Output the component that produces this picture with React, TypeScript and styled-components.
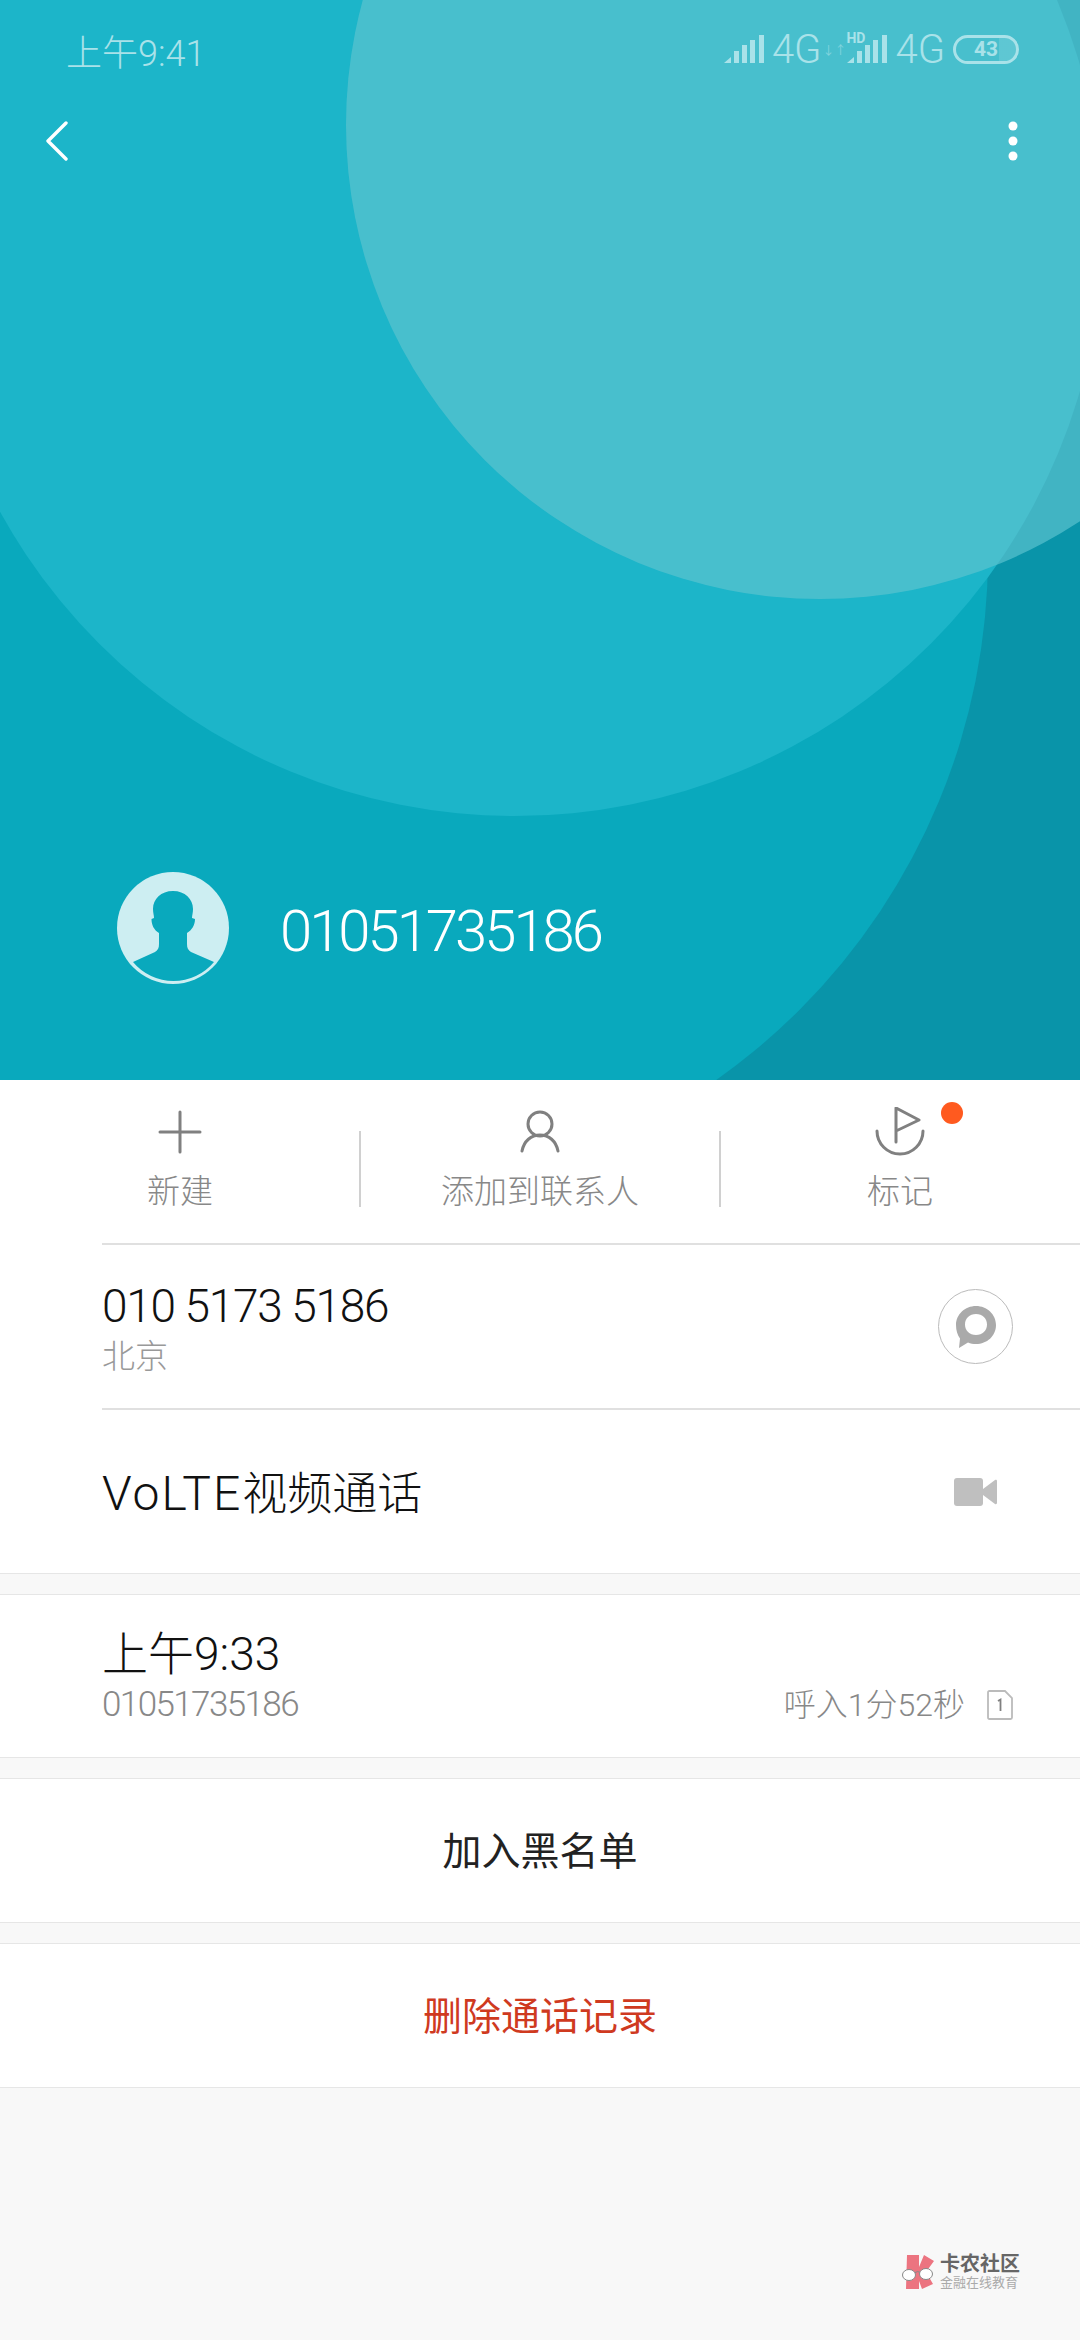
import styled, { createGlobalStyle } from "styled-components"

const SANS = `Roboto, "Noto Sans CJK SC", sans-serif`

export default function App() {
    return (
        <Page>
            <GlobalStyle />
            <Hero>
                <HeroArt viewBox="0 0 1080 1080">
                    <rect width="1080" height="1080" fill="#0994a9" />
                    <circle cx="345" cy="555" r="643" fill="#09a9bd" />
                    <circle cx="515" cy="228" r="588" fill="#1cb5c9" />
                    <circle cx="820" cy="125" r="474" fill="#5ec4cf" fillOpacity="0.67" />
                </HeroArt>
                <StatusBar>
                    <Clock>上午9:41</Clock>
                    <StatusIcons>
                        <Signal />
                        <Net>4G</Net>
                        <Arrows>↓↑</Arrows>
                        <HdSignal>
                            <HdTag>HD</HdTag>
                            <Signal />
                        </HdSignal>
                        <Net>4G</Net>
                        <Battery>
                            <BatteryLevel>43</BatteryLevel>
                        </Battery>
                    </StatusIcons>
                </StatusBar>
                <TopBar>
                    <svg width="24" height="40" viewBox="0 0 24 40">
                        <path d="M21 2 L3 20 L21 38" fill="none" stroke="#fff" strokeWidth="3.4" strokeLinecap="round" strokeLinejoin="round" />
                    </svg>
                    <svg width="10" height="40" viewBox="0 0 10 40">
                        <circle cx="5" cy="5" r="4.5" fill="#fff" />
                        <circle cx="5" cy="20" r="4.5" fill="#fff" />
                        <circle cx="5" cy="35" r="4.5" fill="#fff" />
                    </svg>
                </TopBar>
                <Caller>
                    <svg width="112" height="112" viewBox="0 0 112 112">
                        <circle cx="56" cy="56" r="56" fill="#cdeef2" />
                        <path d="M56 19 C44 19 36 27 36 37 C36 41 37 43 37 46 L34.5 47 C34.5 53 37 58 42 61 L42 72 C42 76 41 78 38 80 L16 90 A52.5 52.5 0 0 0 97 90 L74 80 C71 78 70 76 70 72 L70 61 C75 58 78 53 78 47 L75 46 C75 43 76 41 76 37 C76 27 68 19 56 19 Z" fill="#09a9bd" />
                    </svg>
                    <CallerName>01051735186</CallerName>
                </Caller>
            </Hero>

            <Card>
                <Actions>
                    <Action>
                        <ActionIcon>
                            <svg width="44" height="44" viewBox="0 0 44 44">
                                <path d="M22 2 V42 M2 22 H42" fill="none" stroke="#808080" strokeWidth="3" strokeLinecap="round" />
                            </svg>
                        </ActionIcon>
                        <ActionLabel>新建</ActionLabel>
                    </Action>
                    <Action $divider>
                        <ActionIcon>
                            <svg width="44" height="48" viewBox="0 0 44 48">
                                <circle cx="22" cy="16" r="12" fill="none" stroke="#808080" strokeWidth="3" />
                                <path d="M4 43 C6 33 13 27 22 27 C31 27 38 33 40 43" fill="none" stroke="#808080" strokeWidth="3" strokeLinecap="round" />
                            </svg>
                        </ActionIcon>
                        <ActionLabel>添加到联系人</ActionLabel>
                    </Action>
                    <Action $divider>
                        <ActionIcon>
                            <svg width="50" height="50" viewBox="0 0 50 50">
                                <path d="M2 24 A23 23 0 0 0 48 24" fill="none" stroke="#808080" strokeWidth="3" strokeLinecap="round" />
                                <path d="M21 35 V1 L44 13 L21 24" fill="none" stroke="#808080" strokeWidth="3" strokeLinecap="round" strokeLinejoin="round" />
                            </svg>
                            <Dot />
                        </ActionIcon>
                        <ActionLabel>标记</ActionLabel>
                    </Action>
                </Actions>

                <InfoRow>
                    <InfoText>
                        <PhoneNumber>010 5173 5186</PhoneNumber>
                        <Sub>北京</Sub>
                    </InfoText>
                    <RoundButton>
                        <svg width="42" height="44" viewBox="0 0 42 44">
                            <path fillRule="evenodd" d="M21 1 C32 1 41 9.5 41 20 C41 31 32 39 21 39 C18 39 15.5 38.5 13 37.5 L4 43 L5 33.5 C2.5 30 1 25.5 1 20 C1 9.5 10 1 21 1 Z M21 9 C14.5 9 10 13.5 10 19.5 C10 25.5 14.5 30 21 30 C27.5 30 32 25.5 32 19.5 C32 13.5 27.5 9 21 9 Z" fill="#aaaaaa" />
                        </svg>
                    </RoundButton>
                </InfoRow>

                <VideoRow>
                    <Title>
                        <TitleLatin>VoLTE</TitleLatin>视频通话
                    </Title>
                    <svg width="43" height="28" viewBox="0 0 43 28">
                        <rect x="0" y="0" width="29" height="28" rx="3" fill="#bfbfbf" />
                        <path d="M29 11 L41 2 C42 1.5 43 2 43 3 V25 C43 26 42 26.5 41 26 L29 17 Z" fill="#bfbfbf" />
                    </svg>
                </VideoRow>
            </Card>

            <Section $height={164}>
                <LogRow>
                    <InfoText>
                        <LogTime>上午9:33</LogTime>
                        <LogNumber>01051735186</LogNumber>
                    </InfoText>
                    <LogMeta>
                        呼入1分52秒
                        <svg width="26" height="30" viewBox="0 0 26 30">
                            <path d="M2.5 1 H18 L25 8 V27.5 C25 28.5 24.5 29 23.5 29 H2.5 C1.5 29 1 28.5 1 27.5 V2.5 C1 1.5 1.5 1 2.5 1 Z" fill="none" stroke="#bbbbbb" strokeWidth="1.8" />
                            <path d="M11 11 L13.5 9.5 V21" fill="none" stroke="#808080" strokeWidth="1.8" />
                        </svg>
                    </LogMeta>
                </LogRow>
            </Section>

            <Section $height={145}>
                <CenterButton>加入黑名单</CenterButton>
            </Section>
            <Section $height={145}>
                <CenterButton $danger>删除通话记录</CenterButton>
            </Section>

            <Watermark>
                <svg width="37" height="34" viewBox="0 0 37 34">
                    <path d="M6 0 H18 V12 L23 0 L33 6 L25 17 L32 29 L21 34 L18 26 V34 H5 Z" fill="#ec7480" />
                    <path d="M13 18 Q17 15 20 18" fill="none" stroke="#888" strokeWidth="1" />
                    <ellipse cx="8" cy="20" rx="6.5" ry="5.5" fill="#fff" stroke="#888" strokeWidth="1" />
                    <ellipse cx="25" cy="19" rx="6.5" ry="5.5" fill="#fff" stroke="#888" strokeWidth="1" />
                </svg>
                <MarkText>
                    <MarkName>卡农社区</MarkName>
                    <MarkSlogan>金融在线教育</MarkSlogan>
                </MarkText>
            </Watermark>
        </Page>
    )
}

function Signal() {
    return (
        <svg width="40" height="28" viewBox="0 0 40 28">
            <path d="M0 28 L7 22 V28 Z" fill="#a9e2e9" />
            <rect x="10" y="16" width="5" height="12" fill="#a9e2e9" />
            <rect x="18" y="10" width="5" height="18" fill="#a9e2e9" />
            <rect x="26" y="5" width="5" height="23" fill="#a9e2e9" />
            <rect x="35" y="0" width="5" height="28" fill="#a9e2e9" />
        </svg>
    )
}

const GlobalStyle = createGlobalStyle`
    html, body {
        margin: 0;
        padding: 0;
        background: #f8f8f8;
    }
    svg {
        display: block;
    }
`
const Page = styled.div`
    width: 1080px;
    height: 2340px;
    overflow: hidden;
    font-family: ${SANS};
    background: #f8f8f8;
`
const Hero = styled.header`
    position: relative;
    height: 1080px;
    display: flex;
    flex-direction: column;
    overflow: hidden;
`
const HeroArt = styled.svg`
    position: absolute;
    inset: 0;
    width: 1080px;
    height: 1080px;
`
const StatusBar = styled.div`
    position: relative;
    display: flex;
    justify-content: space-between;
    align-items: center;
    height: 30px;
    margin-top: 34px;
    padding: 0 61px 0 66px;
    color: #a9e2e9;
`
const Clock = styled.span`
    margin-top: 2px;
    font-size: 36px;
    font-weight: 300;
`
const StatusIcons = styled.div`
    display: flex;
    align-items: center;
`
const Net = styled.span`
    font-size: 40px;
    font-weight: 300;
    margin-left: 8px;
`
const Arrows = styled.span`
    font-size: 12px;
    opacity: 0.6;
    width: 26px;
    text-align: center;
`
const HdSignal = styled.div`
    position: relative;
`
const HdTag = styled.span`
    position: absolute;
    left: -1px;
    top: -2px;
    font-size: 14px;
    font-weight: 700;
    line-height: 11px;
`
const Battery = styled.div`
    width: 66px;
    height: 29px;
    margin-left: 8px;
    box-sizing: border-box;
    border: 3px solid #a9e2e9;
    border-radius: 15px;
    display: flex;
    align-items: center;
    justify-content: center;
    background: linear-gradient(90deg, transparent 72%, rgba(255, 255, 255, 0.12) 72%);
`
const BatteryLevel = styled.span`
    font-size: 21px;
    font-weight: 700;
`
const TopBar = styled.div`
    position: relative;
    display: flex;
    justify-content: space-between;
    align-items: center;
    margin-top: 57px;
    padding: 0 62px 0 45px;
`
const Caller = styled.div`
    position: relative;
    display: flex;
    align-items: center;
    gap: 51px;
    margin-top: auto;
    margin-bottom: 96px;
    padding-left: 117px;
`
const CallerName = styled.h1`
    margin: 6px 0 0;
    font-size: 58px;
    font-weight: 300;
    letter-spacing: -3px;
    color: #fff;
`
const Card = styled.section`
    background: #fff;
    height: 494px;
    display: flex;
    flex-direction: column;
    box-sizing: border-box;
    border-bottom: 1px solid #e6e6e6;
`
const Actions = styled.div`
    display: grid;
    grid-template-columns: 360px 360px 360px;
    height: 163px;
    align-items: start;
`
const Action = styled.div<{ $divider?: boolean }>`
    position: relative;
    display: flex;
    flex-direction: column;
    align-items: center;
    padding-top: 24px;
    &::before {
        content: "";
        display: ${(p) => (p.$divider ? "block" : "none")};
        position: absolute;
        left: -1px;
        top: 51px;
        width: 2px;
        height: 76px;
        background: #d0d0d0;
    }
`
const ActionIcon = styled.div`
    position: relative;
    height: 56px;
    display: flex;
    align-items: center;
`
const Dot = styled.span`
    position: absolute;
    left: 66px;
    top: -2px;
    width: 22px;
    height: 22px;
    border-radius: 50%;
    background: #ff5a1f;
`
const ActionLabel = styled.span`
    margin-top: 12px;
    font-size: 33px;
    line-height: 40px;
    font-weight: 300;
    color: #888;
`
const InfoRow = styled.div`
    display: flex;
    justify-content: space-between;
    align-items: center;
    height: 165px;
    margin-left: 102px;
    padding-right: 67px;
    box-sizing: border-box;
    border-top: 2px solid #e0e0e0;
`
const InfoText = styled.div`
    display: flex;
    flex-direction: column;
`
const PhoneNumber = styled.div`
    margin-top: 3px;
    font-size: 46px;
    line-height: 54px;
    font-weight: 300;
    letter-spacing: -1.3px;
    color: #111;
`
const Sub = styled.div`
    margin-top: 3px;
    font-size: 33px;
    line-height: 42px;
    font-weight: 300;
    color: #999;
`
const VideoRow = styled(InfoRow)`
    flex: 1;
    height: auto;
    padding-right: 83px;
`
const RoundButton = styled.div`
    width: 75px;
    height: 75px;
    box-sizing: border-box;
    border: 1px solid #bbb;
    border-radius: 50%;
    display: flex;
    align-items: center;
    justify-content: center;
`
const Title = styled.div`
    margin-bottom: 2px;
    font-size: 45px;
    font-weight: 300;
    color: #111;
`
const TitleLatin = styled.span`
    font-size: 48px;
    letter-spacing: 2px;
`
const Section = styled.section<{ $height: number }>`
    height: ${(p) => p.$height}px;
    margin-top: 20px;
    box-sizing: border-box;
    background: #fff;
    border-top: 1px solid #e6e6e6;
    border-bottom: 1px solid #e6e6e6;
    display: flex;
    align-items: center;
`
const LogRow = styled.div`
    flex: 1;
    display: flex;
    justify-content: space-between;
    align-items: flex-end;
    padding: 0 67px 0 102px;
`
const LogTime = styled.div`
    font-size: 46px;
    line-height: 54px;
    font-weight: 300;
    color: #111;
`
const LogNumber = styled.div`
    margin-top: 3px;
    font-size: 35px;
    line-height: 42px;
    font-weight: 300;
    letter-spacing: -1.6px;
    color: #888;
`
const LogMeta = styled.div`
    display: flex;
    align-items: center;
    gap: 22px;
    font-size: 32px;
    line-height: 42px;
    font-weight: 300;
    color: #888;
`
const CenterButton = styled.div<{ $danger?: boolean }>`
    flex: 1;
    padding-bottom: 5px;
    text-align: center;
    font-size: 39px;
    color: ${(p) => (p.$danger ? "#cf3a1f" : "#222")};
`
const Watermark = styled.div`
    display: flex;
    justify-content: flex-end;
    align-items: center;
    gap: 2px;
    margin-top: 165px;
    padding-right: 60px;
`
const MarkText = styled.div`
    display: flex;
    flex-direction: column;
`
const MarkName = styled.div`
    font-size: 20px;
    line-height: 22px;
    font-weight: 700;
    color: #666;
`
const MarkSlogan = styled.div`
    font-size: 13px;
    line-height: 15px;
    color: #aaa;
`
